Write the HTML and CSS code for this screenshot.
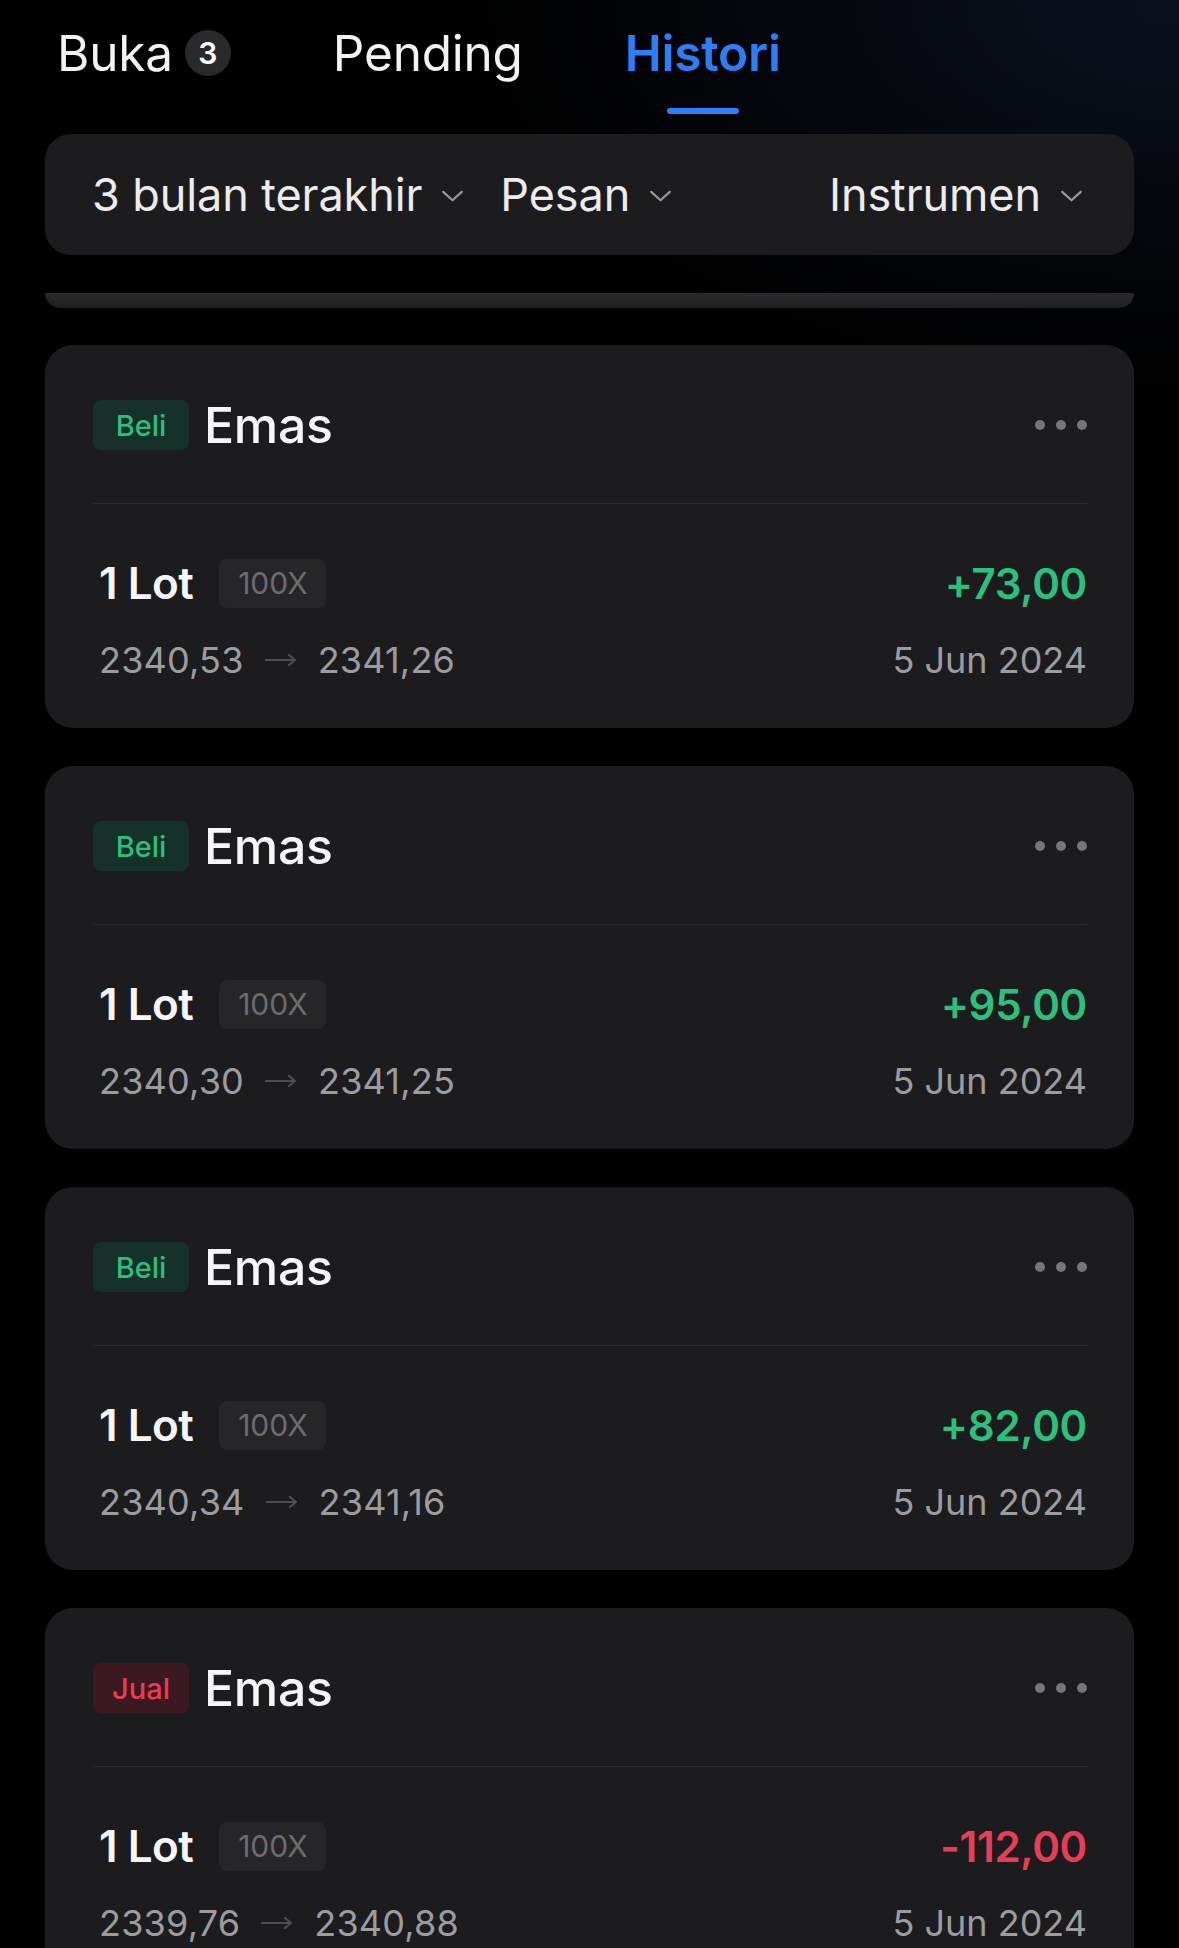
FILE: index.html
```html
<!DOCTYPE html>
<html lang="id">
<head>
<meta charset="utf-8">
<title>Histori</title>
<link rel="stylesheet" href="styles.css">
</head>
<body>
<div class="screen">
  <nav class="tabs">
    <div class="tab">
      <div class="tab-row"><span class="tab-label">Buka</span><span class="count">3</span></div>
    </div>
    <div class="tab">
      <div class="tab-row"><span class="tab-label">Pending</span></div>
    </div>
    <div class="tab active">
      <div class="tab-row"><span class="tab-label">Histori</span></div>
      <span class="indicator"></span>
    </div>
  </nav>

  <div class="filters">
    <div class="filter">3 bulan terakhir <svg class="chev" viewBox="0 0 24 14"><path d="M2 2 L12 11 L22 2"/></svg></div>
    <div class="filter">Pesan <svg class="chev" viewBox="0 0 24 14"><path d="M2 2 L12 11 L22 2"/></svg></div>
    <div class="filter filter-right">Instrumen <svg class="chev" viewBox="0 0 24 14"><path d="M2 2 L12 11 L22 2"/></svg></div>
  </div>

  <div class="peek"></div>

  <div class="list">
    <article class="card">
      <div class="card-head">
        <span class="side buy">Beli</span>
        <span class="asset">Emas</span>
        <span class="more"><i></i><i></i><i></i></span>
      </div>
      <div class="divider"></div>
      <div class="row-main">
        <div class="lot"><span class="lot-text">1 Lot</span><span class="lev">100X</span></div>
        <span class="pnl up">+73,00</span>
      </div>
      <div class="row-sub">
        <div class="prices">2340,53 <svg class="arrow" viewBox="0 0 32 14"><path d="M1 7 H30 M24 2 L30 7 L24 12"/></svg> 2341,26</div>
        <span class="date">5 Jun 2024</span>
      </div>
    </article>

    <article class="card">
      <div class="card-head">
        <span class="side buy">Beli</span>
        <span class="asset">Emas</span>
        <span class="more"><i></i><i></i><i></i></span>
      </div>
      <div class="divider"></div>
      <div class="row-main">
        <div class="lot"><span class="lot-text">1 Lot</span><span class="lev">100X</span></div>
        <span class="pnl up">+95,00</span>
      </div>
      <div class="row-sub">
        <div class="prices">2340,30 <svg class="arrow" viewBox="0 0 32 14"><path d="M1 7 H30 M24 2 L30 7 L24 12"/></svg> 2341,25</div>
        <span class="date">5 Jun 2024</span>
      </div>
    </article>

    <article class="card">
      <div class="card-head">
        <span class="side buy">Beli</span>
        <span class="asset">Emas</span>
        <span class="more"><i></i><i></i><i></i></span>
      </div>
      <div class="divider"></div>
      <div class="row-main">
        <div class="lot"><span class="lot-text">1 Lot</span><span class="lev">100X</span></div>
        <span class="pnl up">+82,00</span>
      </div>
      <div class="row-sub">
        <div class="prices">2340,34 <svg class="arrow" viewBox="0 0 32 14"><path d="M1 7 H30 M24 2 L30 7 L24 12"/></svg> 2341,16</div>
        <span class="date">5 Jun 2024</span>
      </div>
    </article>

    <article class="card">
      <div class="card-head">
        <span class="side sell">Jual</span>
        <span class="asset">Emas</span>
        <span class="more"><i></i><i></i><i></i></span>
      </div>
      <div class="divider"></div>
      <div class="row-main">
        <div class="lot"><span class="lot-text">1 Lot</span><span class="lev">100X</span></div>
        <span class="pnl down">-112,00</span>
      </div>
      <div class="row-sub">
        <div class="prices">2339,76 <svg class="arrow" viewBox="0 0 32 14"><path d="M1 7 H30 M24 2 L30 7 L24 12"/></svg> 2340,88</div>
        <span class="date">5 Jun 2024</span>
      </div>
    </article>
  </div>
</div>
</body>
</html>
```

FILE: styles.css
```css
* { box-sizing: border-box; }

html, body {
  margin: 0;
  padding: 0;
}

body {
  width: 1179px;
  height: 1948px;
  overflow: hidden;
  background: radial-gradient(ellipse 900px 500px at 100% 0%, #0c1120 0%, #05070c 45%, #000 80%);
  background-color: #000;
  font-family: Inter, "Noto Sans", sans-serif;
  color: #f2f2f4;
}

.screen {
  padding: 0 45px;
}

/* Tabs */
.tabs {
  display: flex;
  align-items: flex-start;
  gap: 102px;
  padding: 24px 0 0 12px;
}

.tab {
  display: flex;
  flex-direction: column;
  align-items: center;
}

.tab-row {
  display: flex;
  align-items: center;
  gap: 12px;
  height: 58px;
}

.tab-label {
  font-size: 49.5px;
  line-height: 58px;
  font-weight: 400;
  color: #f4f4f6;
  letter-spacing: -0.2px;
}

.tab.active .tab-label {
  color: #2d7ff9;
  font-weight: 600;
}

.count {
  width: 46px;
  height: 46px;
  border-radius: 50%;
  background: #2a2a2d;
  color: #fff;
  font-size: 30px;
  font-weight: 600;
  display: flex;
  align-items: center;
  justify-content: center;
}

.indicator {
  display: block;
  width: 72px;
  height: 6px;
  border-radius: 3px;
  background: #2d7ff9;
  margin-top: 26px;
}

/* Filters */
.filters {
  margin-top: 20px;
  height: 121px;
  border-radius: 26px;
  background: #1c1c1e;
  display: flex;
  align-items: center;
  padding: 0 51px 0 47px;
  gap: 36px;
}

.filter {
  display: flex;
  align-items: center;
  gap: 19px;
  font-size: 45px;
  line-height: 50px;
  color: #ececee;
  letter-spacing: -0.1px;
}

.filter-right {
  margin-left: auto;
}

.chev {
  width: 23px;
  height: 13px;
  fill: none;
  stroke: #9a9a9e;
  stroke-width: 2.4;
  stroke-linecap: round;
  stroke-linejoin: round;
  margin-top: 4px;
}

/* Peeking card bottom */
.peek {
  margin-top: 38px;
  height: 15px;
  border-radius: 0 0 24px 24px;
  background: linear-gradient(#2a2a2c, #1f1f21);
}

/* Cards */
.list {
  margin-top: 37px;
  display: flex;
  flex-direction: column;
  gap: 38px;
}

.card {
  background: #1c1c1e;
  border-radius: 28px;
  padding: 55px 47px 46px 48px;
}

.card-head {
  display: flex;
  align-items: center;
  height: 50px;
}

.side {
  width: 96px;
  height: 50px;
  display: flex;
  align-items: center;
  justify-content: center;
  border-radius: 8px;
  font-size: 29px;
  font-weight: 500;
}

.side.buy {
  background: #16302a;
  color: #2bc07e;
}

.side.sell {
  background: #3a1a20;
  color: #ea3c56;
}

.asset {
  margin-left: 15px;
  font-size: 50px;
  font-weight: 500;
  color: #f6f6f8;
  letter-spacing: -0.3px;
}

.more {
  margin-left: auto;
  display: flex;
  gap: 11px;
}

.more i {
  display: block;
  width: 10px;
  height: 10px;
  border-radius: 50%;
  background: #76767a;
}

.divider {
  margin-top: 53px;
  height: 1px;
  background: #2b2b2e;
}

.row-main {
  margin-top: 54px;
  height: 50px;
  display: flex;
  align-items: center;
  justify-content: space-between;
}

.lot {
  display: flex;
  align-items: center;
  gap: 26px;
  padding-left: 6px;
}

.lot-text {
  font-size: 44px;
  font-weight: 600;
  color: #f6f6f8;
  letter-spacing: -0.5px;
}

.lev {
  width: 107px;
  height: 49px;
  display: flex;
  align-items: center;
  justify-content: center;
  border-radius: 8px;
  background: #262628;
  color: #6c6c70;
  font-size: 30px;
}

.pnl {
  font-size: 42px;
  font-weight: 600;
  letter-spacing: -0.3px;
}

.pnl.up { color: #2bc07e; }
.pnl.down { color: #ea3c56; }

.row-sub {
  margin-top: 30px;
  height: 44px;
  display: flex;
  align-items: center;
  justify-content: space-between;
  font-size: 36px;
  line-height: 44px;
  color: #9c9ca0;
}

.prices {
  display: flex;
  align-items: center;
  gap: 21px;
  padding-left: 6px;
  letter-spacing: 0.2px;
}

.arrow {
  width: 32px;
  height: 14px;
  fill: none;
  stroke: #4e4e52;
  stroke-width: 2.2;
  stroke-linecap: round;
  stroke-linejoin: round;
}

.date {
  color: #9c9ca0;
}
```
